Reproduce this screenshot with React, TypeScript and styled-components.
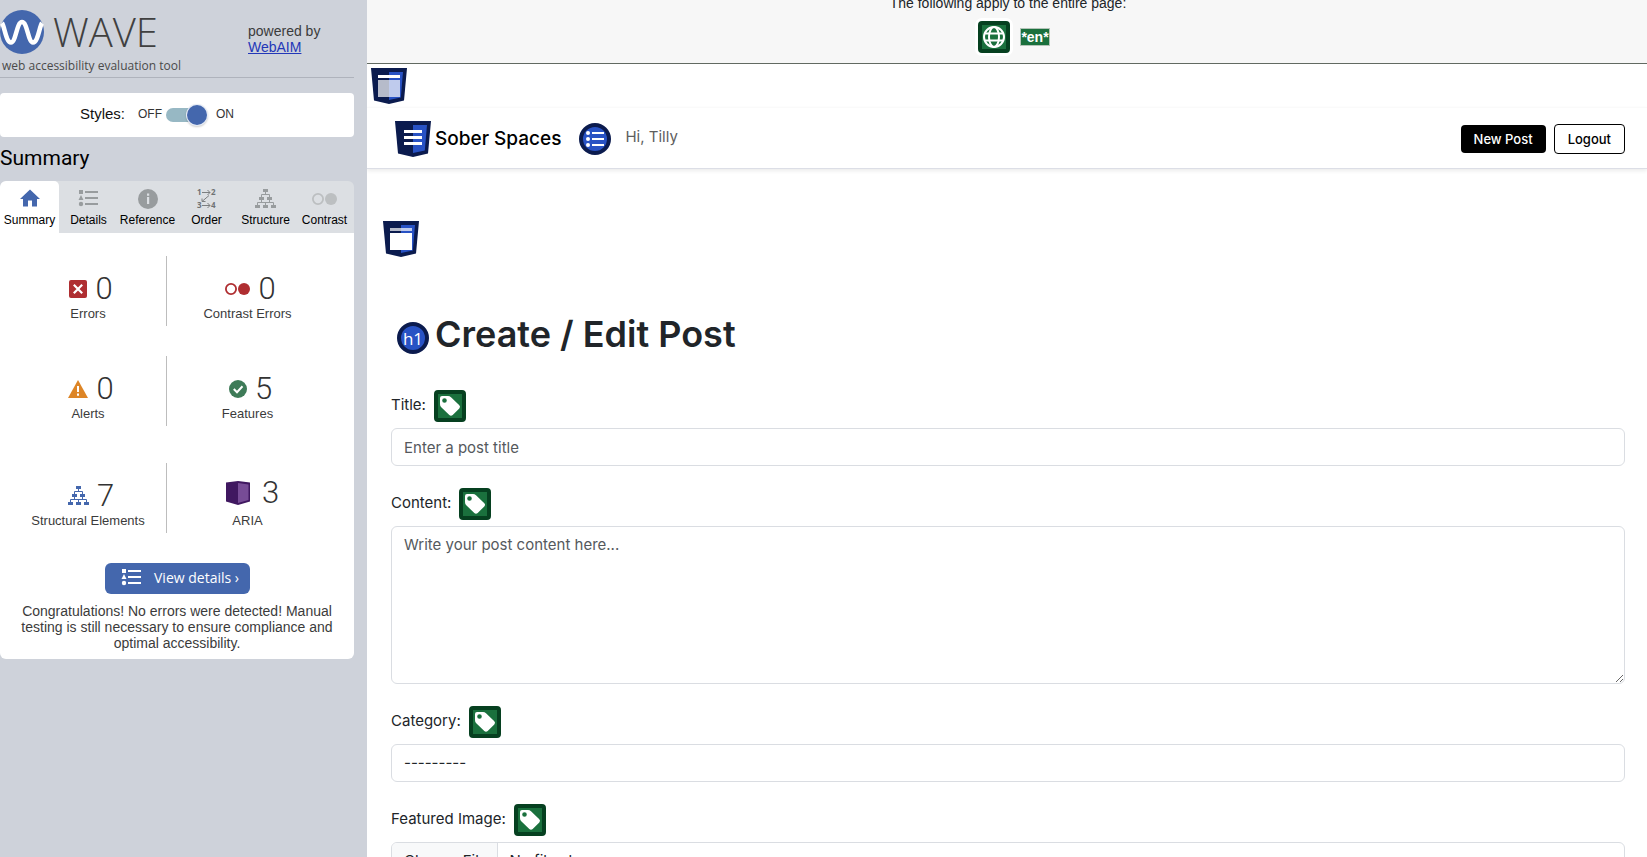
import React from 'react';
import styled, { createGlobalStyle } from 'styled-components';

const sans = '"Liberation Sans", Arial, Helvetica, sans-serif';
const light = 'Roboto, "Liberation Sans", sans-serif';
const ui = 'Inter, "Liberation Sans", sans-serif';
const open = '"Open Sans", "Noto Sans", sans-serif';

const GlobalStyle = createGlobalStyle`
  *, *::before, *::after { box-sizing: border-box; }
  body { margin: 0; overflow: hidden; background: #fff; }
  h1, h2, p { margin: 0; font-weight: 400; }
  button, input, textarea, select { font: inherit; margin: 0; }
  svg { display: block; flex: none; overflow: visible; }
`;

const Shell = styled.div`
  display: flex;
  height: 100vh;
  overflow: hidden;
`;

/* ---------- sidebar ---------- */

const Sidebar = styled.aside`
  flex: none;
  width: 367px;
  padding-right: 13px;
  background: #ced2da;
  color: #3b3b3b;
  font: 14px/16px ${sans};
`;

const Brand = styled.header`
  display: flex;
  justify-content: space-between;
  height: 78px;
  padding: 10px 32px 0 0;
  border-bottom: 1px solid #afb3bc;
`;

const BrandRow = styled.div`
  display: flex;
  align-items: center;
  gap: 9px;
  height: 44px;
`;

const BrandName = styled.span`
  font: 300 40px/44px ${open};
  color: #404040;
`;

const Tagline = styled.p`
  padding: 3px 0 0 2px;
  font: 12px/18px ${open};
  color: #4a4a4a;
`;

const Powered = styled.p`
  width: 74px;
  padding-top: 13px;
  white-space: nowrap;
  a { color: #2337b8; }
`;

const StylesPanel = styled.div`
  display: flex;
  align-items: center;
  height: 44px;
  margin-top: 15px;
  padding: 0 0 3px 80px;
  border-radius: 4px;
  background: #fff;
  color: #111;
  font-size: 15px;
`;

const SwitchLabel = styled.label`
  display: flex;
  align-items: center;
  gap: 4px;
  margin-left: 13px;
  color: #333;
  font-size: 12px;
`;

const Switch = styled.input`
  appearance: none;
  position: relative;
  width: 36px;
  height: 14px;
  margin: 3px 10px 0 0;
  border-radius: 7px;
  background: #97b8c4;
  &::before {
    content: '';
    position: absolute;
    top: -3px;
    left: 0;
    width: 20px;
    height: 20px;
    border-radius: 50%;
    background: #4467ad;
    box-shadow: 0 0 0 1px #e6ecf6, 0 1px 2px 1px rgba(0, 0, 0, 0.2);
  }
  &:checked::before { left: 21px; }
`;

const SectionTitle = styled.h2`
  padding: 9px 0 10px;
  color: #000;
  font: 21px/25px ${light};
`;

const Tabs = styled.div`
  display: grid;
  grid-template-columns: repeat(6, 1fr);
  overflow: hidden;
  border-radius: 6px 6px 0 0;
  background: #dcdfe3;
`;

const Tab = styled.button<{ $active?: boolean }>`
  display: flex;
  flex-direction: column;
  align-items: center;
  gap: 4px;
  height: 52px;
  padding: 8px 0 0;
  border: 0;
  border-radius: 5px 5px 0 0;
  background: ${p => (p.$active ? '#fff' : 'transparent')};
  color: #000;
  font: 12px/14px ${sans};
`;

const Card = styled.section`
  padding: 23px 0 8px;
  border-radius: 0 0 6px 6px;
  background: #fff;
`;

const StatRow = styled.div<{ $gap: number }>`
  display: grid;
  grid-template-columns: 157px 1fr;
  height: 70px;
  margin: 0 26px ${p => p.$gap}px 10px;
`;

const Stat = styled.div`
  display: flex;
  flex-direction: column;
  justify-content: flex-end;
  align-items: center;
  padding-bottom: 5px;
  font-size: 13px;
  line-height: 15px;
  &:first-child { border-right: 1px solid #bdbdbd; }
`;

const StatHead = styled.div`
  display: flex;
  align-items: center;
  gap: 8px;
  padding-left: 6px;
  color: #333;
  font: 300 31px/34px ${light};
`;

const DetailsButton = styled.button`
  display: flex;
  align-items: center;
  gap: 12px;
  width: 145px;
  height: 31px;
  margin: 0 auto 9px 105px;
  padding: 0 0 1px 17px;
  border: 0;
  border-radius: 6px;
  background: #4467ad;
  color: #fff;
  font: 14px/20px ${open};
  white-space: nowrap;
`;

const Note = styled.p`
  padding: 0 12px;
  text-align: center;
`;

/* ---------- evaluated page ---------- */

const Page = styled.div`
  flex: 1;
  min-width: 0;
  overflow: hidden;
  background: #fff;
  color: #212529;
  font: 16px/24px ${ui};
`;

const PageBar = styled.div`
  display: flex;
  flex-direction: column;
  justify-content: flex-end;
  align-items: center;
  gap: 9px;
  height: 64px;
  padding: 0 0 10px 2px;
  overflow: hidden;
  border-bottom: 1px solid #626a62;
  background: #f7f7f7;
  font: 14px/18px ${sans};
`;

const PageIcons = styled.div`
  display: flex;
  align-items: center;
  gap: 10px;
  padding-left: 12px;
`;

const GreenIcon = styled.span<{ $halo?: boolean }>`
  display: grid;
  place-items: center;
  flex: none;
  width: 32px;
  height: 32px;
  border: 4px solid #064020;
  border-radius: 4px;
  background: #1a703d;
  box-shadow: ${p => (p.$halo ? '0 0 0 3px #fff' : 'none')};
`;

const LangTag = styled.span`
  height: 18px;
  margin-bottom: 1px;
  border: 1px solid #b4c4b8;
  background: #1a703d;
  color: #fff;
  font: bold 14px/16px ${sans};
`;

const LandmarkRow = styled.div`
  padding: 4px 4px 3px;
`;

const Nav = styled.nav`
  display: flex;
  align-items: center;
  height: 62px;
  padding: 1px 22px 0 28px;
  border-top: 1px solid #fafafa;
  border-bottom: 1px solid #dcdee6;
  box-shadow: 0 2px 4px rgba(0, 0, 0, 0.08);
`;

const SiteName = styled.a`
  margin: 0 18px 0 4px;
  color: #000;
  font-size: 19px;
  font-weight: 500;
  text-decoration: none;
`;

const Greeting = styled.span`
  margin: 0 auto 3px 14px;
  color: #5e5e5e;
  font-size: 15px;
`;

const NavButton = styled.button<{ $outline?: boolean }>`
  height: ${p => (p.$outline ? 30 : 28)}px;
  margin-left: 8px;
  padding: 0 13px;
  border: ${p => (p.$outline ? '1px solid #000' : '0')};
  border-radius: 4px;
  background: ${p => (p.$outline ? '#fff' : '#000')};
  color: ${p => (p.$outline ? '#000' : '#fff')};
  font-size: 13px;
  font-weight: 500;
  line-height: 20px;
`;

const Main = styled.main`
  padding: 52px 22px 0 24px;
`;

const MainMark = styled.div`
  margin: 0 0 51px -8px;
`;

const Heading = styled.h1`
  display: flex;
  align-items: center;
  gap: 6px;
  margin-bottom: 30px;
  padding-left: 6px;
  font-size: 36px;
  font-weight: 600;
  line-height: 52px;
  svg { margin-top: 8px; }
`;

const Form = styled.form`
  display: flex;
  flex-direction: column;
  gap: 22px;
`;

const FieldHead = styled.div`
  display: flex;
  align-items: center;
  gap: 8px;
  height: 32px;
  margin-bottom: 6px;
  font-size: 15px;
  label { padding-bottom: 3px; }
`;

const controlLook = `
  display: block;
  width: 100%;
  height: 38px;
  padding: 6px 12px;
  border: 1px solid #dadde2;
  border-radius: 6px;
  background: #fff;
  color: #212529;
  font-size: 15px;
  line-height: 24px;
  &::placeholder { color: #55595d; opacity: 1; }
`;

const TextInput = styled.input`${controlLook}`;

const TextArea = styled.textarea`
  ${controlLook}
  height: 158px;
  resize: vertical;
`;

const Select = styled.select`
  ${controlLook}
  appearance: none;
`;

const FileInput = styled.input`
  ${controlLook}
  overflow: hidden;
  &::file-selector-button {
    margin: -6px 12px -6px -12px;
    padding: 6px 9px 6px 12px;
    border: 0;
    border-right: 1px solid #dadde2;
    border-radius: 0;
    background: #f8f9fa;
    color: #212529;
    font: inherit;
  }
`;

/* ---------- icons ---------- */

const WaveLogo = () => (
  <svg width="44" height="44" viewBox="0 0 44 44" aria-hidden="true">
    <circle cx="22" cy="22" r="22" fill="#4467ad" />
    <path d="M2 13C4.500 16 6 32.500 11 32.500C16 32.500 16.500 12 22 12C27.500 12 28 32.500 33 32.500C38 32.500 39.500 16 42 13" fill="none" stroke="#fff" strokeWidth="4.500" />
  </svg>
);

const Home = () => (
  <svg width="20" height="20" viewBox="0 0 20 20" fill="#4467ad" aria-hidden="true">
    <path d="M10 0.500L0 10H3V17.500H8V11.500H12V17.500H17V10H20Z" />
  </svg>
);

const List = ({ color }: { color: string }) => (
  <svg width="20" height="20" viewBox="0 0 20 20" fill={color} aria-hidden="true">
    <path d="M0 1h4v4H0zM2 6l2.500 5h-5zM6 2h13v2H6zM6 8h13v2H6zM6 14h13v2H6z" />
    <circle cx="2" cy="15" r="2.200" />
  </svg>
);

const Info = () => (
  <svg width="20" height="20" viewBox="0 0 20 20" aria-hidden="true">
    <circle cx="10" cy="10" r="10" fill="#989c9e" />
    <path d="M9 4.500h2.200v2.200H9zM9 8h2.200v7H9z" fill="#dcdfe3" />
  </svg>
);

const Order = () => (
  <svg width="20" height="20" viewBox="0 0 20 20" fill="#6f7274" aria-hidden="true">
    <g fontFamily="Open Sans" fontWeight="700" fontSize="8">
      <text x="0" y="6">1</text><text x="14" y="6">2</text>
      <text x="0" y="19">3</text><text x="14" y="19">4</text>
    </g>
    <path d="M5 3.500H13M10.500 1L13 3.500L10.500 6M5 16.500H13M10.500 14L13 16.500L10.500 19M12 6.500L5 12.500M5 9.500V12.500H8.500" fill="none" stroke="#7b7e80" />
  </svg>
);

const Structure = ({ color }: { color: string }) => (
  <svg width="21" height="20" viewBox="0 0 21 20" fill={color} aria-hidden="true">
    <path d="M8 0h5v3H8zM4 8h5v3H4zM12 8h5v3h-5zM0 16h5v3H0zM8 16h5v3H8zM16 16h5v3h-5z" />
    <path d="M10.500 3V5.500M6.500 8V5.500H14.500V8M6.500 11V13.500M14.500 11V13.500M2.500 16V13.500H18.500V16M10.500 13.500V16" fill="none" stroke={color} />
  </svg>
);

const Contrast = ({ color }: { color: string }) => (
  <svg width="25" height="20" viewBox="0 0 25 20" aria-hidden="true">
    <circle cx="6" cy="10" r="5.100" fill="none" stroke={color} strokeWidth="1.800" />
    <circle cx="19" cy="10" r="6" fill={color} />
  </svg>
);

const ErrorIcon = () => (
  <svg width="18" height="18" viewBox="0 0 18 18" aria-hidden="true">
    <rect width="18" height="18" rx="2" fill="#af2e31" />
    <path d="M4.800 4.800L13.200 13.200M13.200 4.800L4.800 13.200" stroke="#fff" strokeWidth="2.200" />
  </svg>
);

const AlertIcon = () => (
  <svg width="20" height="18" viewBox="0 0 20 18" aria-hidden="true">
    <path d="M10 0L20 18H0Z" fill="#dd8526" />
    <path d="M9 6h2v6H9zM9 13.500h2v2.200H9z" fill="#fff" />
  </svg>
);

const FeatureIcon = () => (
  <svg width="18" height="18" viewBox="0 0 18 18" aria-hidden="true">
    <circle cx="9" cy="9" r="9" fill="#3e7b58" />
    <path d="M4.800 9L8 12.200L13.500 6.300" fill="none" stroke="#fff" strokeWidth="2" />
  </svg>
);

const AriaIcon = () => (
  <svg width="32" height="40" viewBox="-4 -8 32 40" aria-hidden="true">
    <path d="M0 1.500L12 0L24 1.500V20.500L12 24L0 20.500Z" fill="#401860" />
    <path d="M12 2L22.500 3.500V19L12 22Z" fill="#774c96" />
  </svg>
);

const Shield = ({ kind }: { kind: 'header' | 'nav' | 'main' }) => (
  <svg width="36" height="36" viewBox="0 0 36 36" aria-hidden="true">
    <path d="M0 0H36L33 32.500L18 36L3 32.500Z" fill="#0b1b4e" />
    <path d="M18 4H32L29.800 29.500L18 32Z" fill="#2852c4" />
    {kind === 'nav' ? (
      <path d="M9 9h18v3H9zM9 15h18v3H9zM9 21h18v3H9z" fill="#fff" />
    ) : (
      <g fill="#fff">
        <path d="M7 7h22v3H7z" opacity={kind === 'header' ? 1 : 0.7} />
        <path d="M7 12h22v17H7z" opacity={kind === 'header' ? 0.7 : 1} />
      </g>
    )}
  </svg>
);

const RoundList = () => (
  <svg width="32" height="32" viewBox="0 0 32 32" aria-hidden="true">
    <circle cx="16" cy="16" r="14" fill="#2852c4" stroke="#0b1b4e" strokeWidth="4" />
    <path d="M13 9h12v2H13zM13 15h12v2H13zM13 21h12v2H13z" fill="#fff" />
    <g fill="#fff">
      <circle cx="9" cy="10" r="2" /><circle cx="9" cy="16" r="2" /><circle cx="9" cy="22" r="2" />
    </g>
  </svg>
);

const HeadingIcon = () => (
  <svg width="32" height="32" viewBox="0 0 32 32" aria-hidden="true">
    <circle cx="16" cy="16" r="14" fill="#2852c4" stroke="#0b1b4e" strokeWidth="4" />
    <text x="16" y="23" textAnchor="middle" fontFamily="Open Sans" fontWeight="400" fontSize="17" fill="#fff">h1</text>
  </svg>
);

const Tag = () => (
  <GreenIcon>
    <svg width="24" height="24" viewBox="4 4 24 24" aria-hidden="true">
      <path fillRule="evenodd" fill="#fff" d="M8 6H14Q15.700 6 17 7.300L25.300 15.200Q26.800 16.800 25.300 18.400L18.700 25Q17 26.600 15.300 25L7 17Q6 16 6 14V8Q6 6 8 6ZM10.500 8.200A2.300 2.300 0 1 0 10.500 12.800A2.300 2.300 0 1 0 10.500 8.200Z" />
    </svg>
  </GreenIcon>
);

const Globe = () => (
  <svg width="24" height="24" viewBox="0 0 24 24" fill="none" stroke="#fff" strokeWidth="2" aria-hidden="true">
    <circle cx="12" cy="12" r="10" />
    <ellipse cx="12" cy="12" rx="5" ry="10" />
    <path d="M3 8.500H21M3 15.500H21" />
  </svg>
);

/* ---------- composition ---------- */

const tabs = [
  { name: 'Summary', icon: <Home /> },
  { name: 'Details', icon: <List color="#989c9e" /> },
  { name: 'Reference', icon: <Info /> },
  { name: 'Order', icon: <Order /> },
  { name: 'Structure', icon: <Structure color="#989c9e" /> },
  { name: 'Contrast', icon: <Contrast color="#bcbfc1" /> },
];

const stats = [
  { gap: 30, cells: [
    { name: 'Errors', value: 0, icon: <ErrorIcon /> },
    { name: 'Contrast Errors', value: 0, icon: <Contrast color="#af2e31" /> },
  ] },
  { gap: 37, cells: [
    { name: 'Alerts', value: 0, icon: <AlertIcon /> },
    { name: 'Features', value: 5, icon: <FeatureIcon /> },
  ] },
  { gap: 30, cells: [
    { name: 'Structural Elements', value: 7, icon: <Structure color="#4467ad" /> },
    { name: 'ARIA', value: 3, icon: <AriaIcon /> },
  ] },
];

const Field = ({ id, label, children }: { id: string; label: string; children: React.ReactNode }) => (
  <div>
    <FieldHead>
      <label htmlFor={id}>{label}</label>
      <Tag />
    </FieldHead>
    {children}
  </div>
);

export default function App() {
  return (
    <Shell>
      <GlobalStyle />
      <Sidebar>
        <Brand>
          <div>
            <BrandRow>
              <WaveLogo />
              <BrandName>WAVE</BrandName>
            </BrandRow>
            <Tagline>web accessibility evaluation tool</Tagline>
          </div>
          <Powered>powered by<br /><a href="#webaim">WebAIM</a></Powered>
        </Brand>
        <StylesPanel>
          <span>Styles:</span>
          <SwitchLabel>
            OFF <Switch type="checkbox" defaultChecked /> ON
          </SwitchLabel>
        </StylesPanel>
        <SectionTitle>Summary</SectionTitle>
        <Tabs role="tablist">
          {tabs.map((t, i) => (
            <Tab key={t.name} type="button" role="tab" aria-selected={i === 0} $active={i === 0}>
              {t.icon}
              {t.name}
            </Tab>
          ))}
        </Tabs>
        <Card>
          {stats.map(row => (
            <StatRow key={row.cells[0].name} $gap={row.gap}>
              {row.cells.map(c => (
                <Stat key={c.name}>
                  <StatHead>{c.icon}{c.value}</StatHead>
                  {c.name}
                </Stat>
              ))}
            </StatRow>
          ))}
          <DetailsButton type="button"><List color="#fff" />View details ›</DetailsButton>
          <Note>Congratulations! No errors were detected! Manual testing is still necessary to ensure compliance and optimal accessibility.</Note>
        </Card>
      </Sidebar>
      <Page>
        <PageBar>
          <span>The following apply to the entire page:</span>
          <PageIcons>
            <GreenIcon $halo><Globe /></GreenIcon>
            <LangTag>*en*</LangTag>
          </PageIcons>
        </PageBar>
        <LandmarkRow><Shield kind="header" /></LandmarkRow>
        <Nav>
          <Shield kind="nav" />
          <SiteName href="#home">Sober Spaces</SiteName>
          <RoundList />
          <Greeting>Hi, Tilly</Greeting>
          <NavButton type="button">New Post</NavButton>
          <NavButton type="button" $outline>Logout</NavButton>
        </Nav>
        <Main>
          <MainMark><Shield kind="main" /></MainMark>
          <Heading><HeadingIcon />Create / Edit Post</Heading>
          <Form>
            <Field id="title" label="Title:">
              <TextInput id="title" type="text" placeholder="Enter a post title" />
            </Field>
            <Field id="content" label="Content:">
              <TextArea id="content" placeholder="Write your post content here..." />
            </Field>
            <Field id="category" label="Category:">
              <Select id="category"><option>---------</option></Select>
            </Field>
            <Field id="image" label="Featured Image:">
              <FileInput id="image" type="file" />
            </Field>
          </Form>
        </Main>
      </Page>
    </Shell>
  );
}
